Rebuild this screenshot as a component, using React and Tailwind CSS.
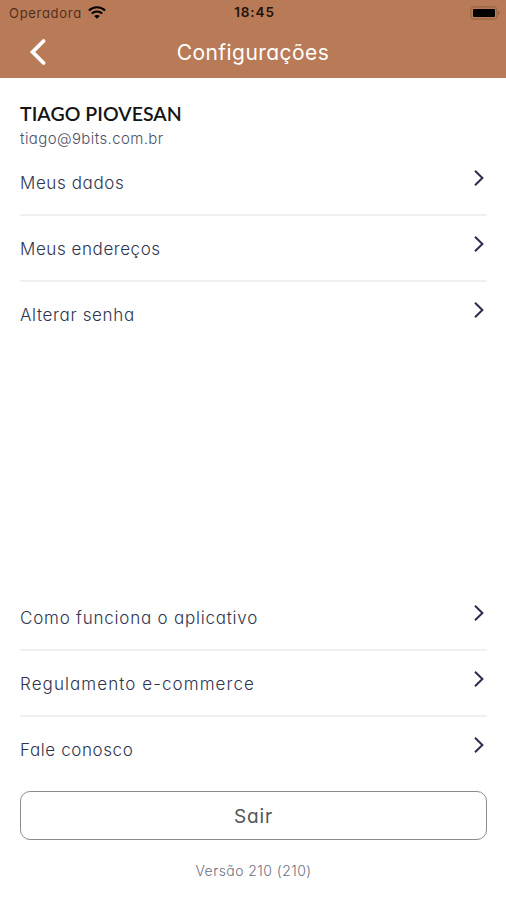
import React from 'react';

const accountItems = [
  { id: 'dados', label: 'Meus dados', spacing: 'tracking-[0.6px]' },
  { id: 'enderecos', label: 'Meus endereços', spacing: 'tracking-[0.57px]' },
  { id: 'senha', label: 'Alterar senha', spacing: 'tracking-[0.65px]' },
];

const helpItems = [
  { id: 'como-funciona', label: 'Como funciona o aplicativo', spacing: 'tracking-[0.78px]' },
  { id: 'regulamento', label: 'Regulamento e-commerce', spacing: 'tracking-[1.08px]' },
  { id: 'fale', label: 'Fale conosco', spacing: 'tracking-[0.6px]' },
];

const StatusBar = () => (
  <div className="grid h-[26px] grid-cols-3 items-center pl-[9px] pr-[6px] text-black">
    <div className="flex items-center gap-[6px]">
      <span className="text-[13px] leading-none tracking-[0.7px] text-[#51301f]">Operadora</span>
      <svg className="-mt-px" width="18" height="13" viewBox="0 0 18 13" fill="none" stroke="currentColor" strokeWidth="2.1">
        <path d="M0.9 4.6C5.4 0.2 12.6 0.2 17.1 4.6" />
        <path d="M3.8 7.6C6.7 4.8 11.3 4.8 14.2 7.6" />
        <path d="M6.2 10L9 12.8L11.8 10C10.2 8.6 7.8 8.6 6.2 10Z" fill="currentColor" stroke="none" />
      </svg>
    </div>
    <span className="text-center text-[13.5px] font-semibold leading-none tracking-[0.9px] text-[#21130b]">18:45</span>
    <svg className="justify-self-end" width="30" height="14" viewBox="0 0 30 14">
      <rect x="0.8" y="0.8" width="26" height="12.4" rx="3" fill="none" stroke="#9a6647" strokeWidth="1.2" />
      <rect x="3" y="3" width="22" height="8" rx="1" fill="#000" />
      <path d="M28 4.6C29.8 5.4 29.8 8.6 28 9.4Z" fill="#8a5a3f" />
    </svg>
  </div>
);

const Header = () => (
  <header className="h-[78px] bg-[#b97b57]">
    <StatusBar />
    <div className="grid h-[52px] grid-cols-[60px_1fr_60px] items-center">
      <button aria-label="Voltar" className="pl-[28px]">
        <svg width="20" height="28" viewBox="0 0 20 28" fill="none" stroke="#fff" strokeWidth="3.8" strokeLinecap="round" strokeLinejoin="miter">
          <path d="M15.6 3L4.6 14L15.6 25" />
        </svg>
      </button>
      <h1 className="text-center text-[21px] leading-none tracking-[0.45px] text-white">Configurações</h1>
    </div>
  </header>
);

const MenuList = ({ items }) => (
  <ul className="divide-y-2 divide-[#f0f0f2]">
    {items.map((item) => (
      <li key={item.id} className="flex h-[66px] items-center justify-between last:h-[64px]">
        <span className={`whitespace-nowrap pt-1 text-[17px] font-light text-[#2f3550] ${item.spacing}`}>{item.label}</span>
        <svg className="mb-2 mr-[2px]" width="12" height="18" viewBox="0 0 12 18" fill="none" stroke="#2b2d4c" strokeWidth="2">
          <path d="M2 1.8L9.4 9L2 16.2" />
        </svg>
      </li>
    ))}
  </ul>
);

const App = () => {
  return (
    <div className="flex h-[900px] w-[506px] flex-col overflow-hidden bg-white font-['Inter','Liberation_Sans',sans-serif] [font-feature-settings:'cv11']">
      <Header />
      <main className="flex flex-1 flex-col pl-[20px] pr-[19px] pt-[24px]">
        <p className="font-['Lato',sans-serif] text-[19.5px] font-semibold leading-[24px] tracking-[0.05px] text-[#141414]">TIAGO PIOVESAN</p>
        <p className="text-[15px] font-light leading-[26px] tracking-[0.4px] text-[#4d5266]">tiago@9bits.com.br</p>
        <div className="-mt-[2px]">
          <MenuList items={accountItems} />
        </div>
        <div className="mt-auto">
          <MenuList items={helpItems} />
          <button className="mt-[10px] flex h-[49px] w-full items-center justify-center rounded-[10px] border-[1.5px] border-[#8c8c8c] pt-[3px] text-[19px] tracking-[0.8px] text-[#555]">
            Sair
          </button>
          <p className="mb-[16px] mt-[18px] text-center text-[14px] font-light leading-[26px] tracking-[0.45px] text-[#6b6f80]">Versão 210 (210)</p>
        </div>
      </main>
    </div>
  );
};

export default App;
